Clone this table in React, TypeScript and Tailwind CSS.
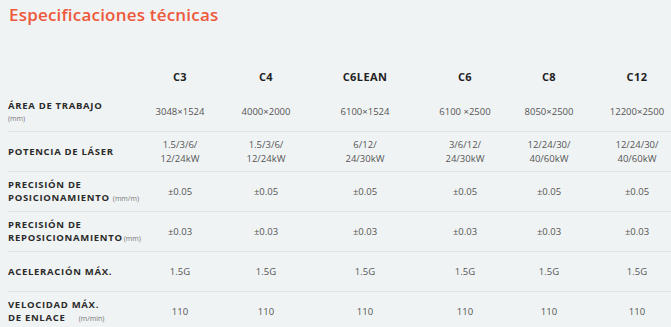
import React from 'react';

const COLS = 'grid grid-cols-[129px_86px_86px_112px_88px_80px_96px] items-center';

const models = ['C3', 'C4', 'C6LEAN', 'C6', 'C8', 'C12'];

type Row = {
  label: React.ReactNode;
  values: string[][];
};

const Unit = ({ children, className = '' }: { children: React.ReactNode; className?: string }) => (
  <span className={`text-[7px] font-normal tracking-normal text-[#777] ${className}`}>{children}</span>
);

const rows: Row[] = [
  {
    label: (
      <>
        <div>ÁREA DE TRABAJO</div>
        <div className="leading-[12px]"><Unit>(mm)</Unit></div>
      </>
    ),
    values: [['3048×1524'], ['4000×2000'], ['6100×1524'], ['6100 ×2500'], ['8050×2500'], ['12200×2500']],
  },
  {
    label: <div>POTENCIA DE LÁSER</div>,
    values: [
      ['1.5/3/6/', '12/24kW'],
      ['1.5/3/6/', '12/24kW'],
      ['6/12/', '24/30kW'],
      ['3/6/12/', '24/30kW'],
      ['12/24/30/', '40/60kW'],
      ['12/24/30/', '40/60kW'],
    ],
  },
  {
    label: (
      <>
        <div>PRECISIÓN DE</div>
        <div className="whitespace-nowrap">POSICIONAMIENTO <Unit>(mm/m)</Unit></div>
      </>
    ),
    values: Array(6).fill(['±0.05']),
  },
  {
    label: (
      <>
        <div>PRECISIÓN DE</div>
        <div className="whitespace-nowrap">REPOSICIONAMIENTO<Unit className="ml-[1px]">(mm)</Unit></div>
      </>
    ),
    values: Array(6).fill(['±0.03']),
  },
  {
    label: <div>ACELERACIÓN MÁX.</div>,
    values: Array(6).fill(['1.5G']),
  },
  {
    label: (
      <>
        <div>VELOCIDAD MÁX.</div>
        <div className="whitespace-nowrap">DE ENLACE <Unit className="ml-[10px]">(m/min)</Unit></div>
      </>
    ),
    values: Array(6).fill(['110']),
  },
];

export default function App() {
  return (
    <div className="w-[671px] h-[327px] overflow-hidden bg-[#f0f3f4] font-['Open_Sans',sans-serif]">
      <h2 className="pl-[9px] pt-[2px] text-[17px] leading-[26px] font-semibold tracking-[0.2px] text-[#ee583b]">
        Especificaciones técnicas
      </h2>

      <div className="ml-[8px] mt-[34px] w-[685px]">
        {/* Header */}
        <div className={`${COLS} h-[30px]`}>
          <div />
          {models.map((m) => (
            <div key={m} className="text-center text-[11px] font-bold tracking-[0.4px] text-[#222]">
              {m}
            </div>
          ))}
        </div>

        {rows.map((row, i) => (
          <div
            key={i}
            className={`${COLS} ${i === 0 ? 'h-[39px]' : 'h-[40px] border-t border-[#e1e5e7]'}`}
          >
            <div className="text-[9.5px] leading-[13px] font-bold tracking-[0.7px] text-[#2a2a2a]">
              {row.label}
            </div>
            {row.values.map((v, j) => (
              <div key={j} className="text-center text-[9.5px] leading-[13.5px] text-[#555]">
                {v.map((line, k) => (
                  <div key={k}>{line}</div>
                ))}
              </div>
            ))}
          </div>
        ))}
      </div>
    </div>
  );
}
